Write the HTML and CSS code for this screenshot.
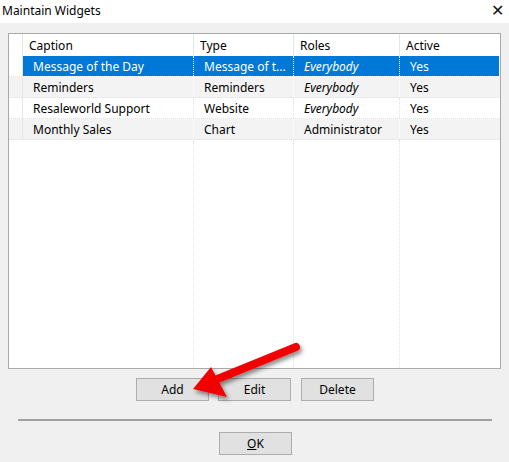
FILE: index.html
```html
<!DOCTYPE html>
<html lang="en">
<head>
    <meta charset="UTF-8">
    <title>Maintain Widgets</title>
    <link rel="stylesheet" href="styles.css">
</head>
<body>
    <div class="titlebar">
        <span class="title">Maintain Widgets</span>
        <span class="close">&#x2715;</span>
    </div>

    <div class="dialog">
        <div class="listview">
            <div class="row header">
                <span class="gutter"></span>
                <span class="cell">Caption</span>
                <span class="cell">Type</span>
                <span class="cell">Roles</span>
                <span class="cell">Active</span>
            </div>
            <div class="row selected">
                <span class="gutter"></span>
                <span class="cell">Message of the Day</span>
                <span class="cell">Message of t...</span>
                <span class="cell role">Everybody</span>
                <span class="cell">Yes</span>
            </div>
            <div class="row striped">
                <span class="gutter"></span>
                <span class="cell">Reminders</span>
                <span class="cell">Reminders</span>
                <span class="cell role">Everybody</span>
                <span class="cell">Yes</span>
            </div>
            <div class="row">
                <span class="gutter"></span>
                <span class="cell">Resaleworld Support</span>
                <span class="cell">Website</span>
                <span class="cell role">Everybody</span>
                <span class="cell">Yes</span>
            </div>
            <div class="row striped">
                <span class="gutter"></span>
                <span class="cell">Monthly Sales</span>
                <span class="cell">Chart</span>
                <span class="cell">Administrator</span>
                <span class="cell">Yes</span>
            </div>
            <div class="row filler">
                <span class="gutter"></span>
                <span class="cell"></span>
                <span class="cell"></span>
                <span class="cell"></span>
                <span class="cell"></span>
            </div>
        </div>

        <div class="button-row">
            <button class="btn">Add</button>
            <button class="btn">Edit</button>
            <button class="btn">Delete</button>
        </div>

        <hr class="separator">

        <div class="footer">
            <button class="btn"><u>O</u>K</button>
        </div>
    </div>

    <!-- callout arrow pointing at Add -->
    <svg class="arrow" width="509" height="462" viewBox="0 0 509 462">
        <defs>
            <filter id="shadow" x="-20%" y="-20%" width="140%" height="140%">
                <feDropShadow dx="2" dy="3" stdDeviation="2" flood-color="#000" flood-opacity="0.45"/>
            </filter>
        </defs>
        <g filter="url(#shadow)">
            <line x1="296" y1="347" x2="215" y2="380" stroke="#f20000" stroke-width="8" stroke-linecap="round"/>
            <polygon points="193,389 211,367 227,397" fill="#f20000"/>
        </g>
    </svg>
</body>
</html>
```

FILE: styles.css
```css
body {
    margin: 0;
    width: 509px;
    height: 462px;
    background-color: #f0f0f0;
    font-family: "Noto Sans", "Open Sans", sans-serif;
    font-size: 12px;
    color: #000;
    position: relative;
    overflow: hidden;
}
.titlebar {
    height: 23px;
    background-color: #fff;
    display: flex;
    align-items: center;
    justify-content: space-between;
    padding: 0 5px 2px 2px;
    box-sizing: border-box;
}
.close {
    font-size: 16px;
    font-family: "DejaVu Sans", sans-serif;
    font-weight: lighter;
    color: #111;
}
.dialog {
    padding: 10px 8px 0 8px;
}
.listview {
    width: 493px;
    height: 336px;
    box-sizing: border-box;
    border: 1px solid #a9a9a9;
    background-color: #fff;
    display: flex;
    flex-direction: column;
}
.row {
    display: grid;
    grid-template-columns: 14px 171px 100px 106px 100px;
    height: 21px;
    align-items: stretch;
    border-bottom: 1px dotted #e2e2e2;
    box-sizing: border-box;
}
.row .cell {
    padding: 1px 0 0 10px;
    line-height: 20px;
    white-space: nowrap;
    overflow: hidden;
    border-right: 1px dotted #e2e2e2;
}
.row .gutter {
    border-right: 1px solid #e5e5e5;
}
.header {
    height: 22px;
    border-bottom: none;
}
.header .cell {
    padding: 1px 0 0 6px;
    line-height: 22px;
    border-right: 1px solid #e5e5e5;
}
.header .cell:last-child {
    border-right: none;
}
.row .cell:last-child {
    border-right: none;
}
.selected .cell {
    background-color: #0078d7;
    color: #fff;
    border-right-color: #fff;
}
.selected .cell:last-child {
    margin-right: 1px;
}
.striped {
    background-color: #f3f3f3;
}
.striped .cell {
    border-right-color: #fff;
}
.role {
    font-style: italic;
}
.row.filler {
    flex: 1;
    border-bottom: none;
}
.filler .gutter {
    border-right: none;
}
.button-row {
    display: flex;
    gap: 9px;
    padding-left: 128px;
    margin-top: 9px;
}
.btn {
    width: 73px;
    height: 23px;
    box-sizing: border-box;
    border: 1px solid #adadad;
    background-color: #e1e1e1;
    font-family: inherit;
    font-size: 12px;
    color: #000;
    padding: 0;
}
.button-row .btn:last-child {
    margin-left: 1px;
}
.separator {
    width: 474px;
    margin: 18px 0 0 10px;
    border: none;
    border-top: 2px solid #a0a0a0;
    height: 0;
}
.footer {
    padding-left: 211px;
    margin-top: 11px;
}
.arrow {
    position: absolute;
    left: 0;
    top: 0;
    pointer-events: none;
}
```
